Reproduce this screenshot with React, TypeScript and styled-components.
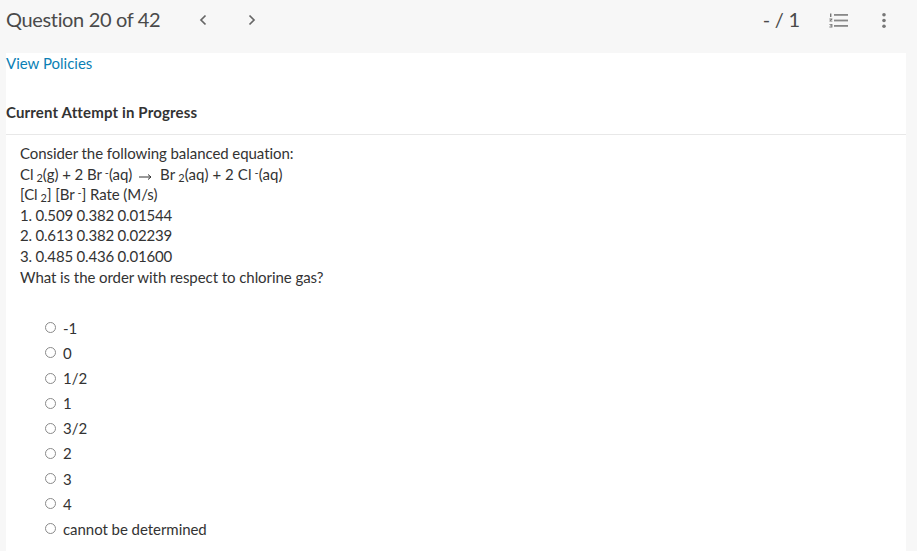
import { createGlobalStyle } from 'styled-components';
import styled from 'styled-components';

const options = ['-1', '0', '1/2', '1', '3/2', '2', '3', '4', 'cannot be determined'];

const rows = ['1. 0.509 0.382 0.01544', '2. 0.613 0.382 0.02239', '3. 0.485 0.436 0.01600'];

const GlobalStyle = createGlobalStyle`
  html, body {
    margin: 0;
    padding: 0;
    background: #f7f7f7;
  }
  body {
    font-family: Lato, "Liberation Sans", sans-serif;
    color: #333;
  }
`;

const Page = styled.div`
  width: 917px;
  height: 551px;
  overflow: hidden;
`;

const Header = styled.header`
  display: flex;
  align-items: center;
  height: 53px;
  padding: 0 31px 13px 6px;
  box-sizing: border-box;
`;

const Title = styled.h1`
  margin: 0 0 3px;
  font-size: 20px;
  font-weight: 400;
  letter-spacing: -0.35px;
  color: #4a4a4a;
  width: 193px;
`;

const NavButton = styled.button`
  display: flex;
  padding: 0;
  border: 0;
  background: none;
  width: 49px;
`;

const Score = styled.span`
  margin: 0 0 3px auto;
  font-size: 20px;
  letter-spacing: -0.2px;
  color: #4a4a4a;
`;

const ListButton = styled.button`
  display: flex;
  padding: 0;
  border: 0;
  background: none;
  margin-left: 29px;
`;

const MoreButton = styled.button`
  display: flex;
  padding: 0;
  border: 0;
  background: none;
  margin-left: 34px;
`;

const Content = styled.main`
  margin: 0 11px 0 6px;
  background: #fff;
  height: 498px;
`;

const PolicyLink = styled.a`
  display: block;
  font-size: 15px;
  line-height: 20px;
  color: #0b7fb5;
`;

const AttemptHeading = styled.h2`
  margin: 28px 0 0;
  padding-bottom: 11px;
  font-size: 15px;
  line-height: 22px;
  font-weight: 700;
  letter-spacing: 0.15px;
  color: #333;
  border-bottom: 1px solid #e8e8e8;
`;

const Question = styled.div`
  padding: 8px 14px 0;
  font-size: 15px;
  line-height: 20.6px;
  letter-spacing: -0.065px;
`;

const DataRow = styled.div`
  letter-spacing: -0.19px;
`;

const Products = styled.span`
  letter-spacing: 0.08px;
`;

const Sub = styled.span`
  font-size: 11px;
  vertical-align: -2px;
  line-height: 0;
  margin-left: 3px;
`;

const Sup = styled.span`
  font-size: 11px;
  vertical-align: 3px;
  line-height: 0;
  margin-left: 3px;
`;

const Arrow = styled.svg`
  margin: 0 8px 0 7px;
  vertical-align: -1px;
`;

const OptionList = styled.ul`
  list-style: none;
  margin: 28px 0 0;
  padding: 0 0 0 38.5px;
`;

const Option = styled.li`
  display: flex;
  align-items: center;
  gap: 7.5px;
  height: 25.15px;
  font-size: 15px;
  letter-spacing: -0.05px;
`;

const Radio = styled.span`
  box-sizing: border-box;
  width: 11px;
  height: 11px;
  border: 1px solid #8a8a8a;
  border-radius: 50%;
  flex: none;
`;

export default function App() {
  return (
    <Page>
      <GlobalStyle />
      <Header>
        <Title>Question 20 of 42</Title>
        <NavButton aria-label="Previous">
          <svg width="8" height="12" viewBox="0 0 8 12">
            <path d="M6.5 1.5 2 6l4.5 4.5" fill="none" stroke="#666" strokeWidth="1.7" />
          </svg>
        </NavButton>
        <NavButton aria-label="Next">
          <svg width="8" height="12" viewBox="0 0 8 12">
            <path d="M1.5 1.5 6 6l-4.5 4.5" fill="none" stroke="#666" strokeWidth="1.7" />
          </svg>
        </NavButton>
        <Score>- / 1</Score>
        <ListButton aria-label="Question list">
          <svg width="19" height="15" viewBox="0 0 19 15" fill="#888">
            <rect x="5" y="1" width="14" height="1.8" />
            <rect x="5" y="6.6" width="14" height="1.8" />
            <rect x="5" y="12" width="14" height="1.8" />
            <path d="M1 .5h1.4v3.4H1zM.4 5.6h3v.8l-1.6 1.4h1.6v.8h-3v-.8L2 6.4H.4zM.4 11h3v3.4h-3v-.8h2v-.6h-1.4v-.6h1.4v-.6h-2z" fill="#777" />
          </svg>
        </ListButton>
        <MoreButton aria-label="More">
          <svg width="4" height="15" viewBox="0 0 4 15" fill="#777">
            <circle cx="2" cy="1.8" r="1.8" />
            <circle cx="2" cy="7.5" r="1.8" />
            <circle cx="2" cy="13.2" r="1.8" />
          </svg>
        </MoreButton>
      </Header>
      <Content>
        <PolicyLink>View Policies</PolicyLink>
        <AttemptHeading>Current Attempt in Progress</AttemptHeading>
        <Question>
          <div>Consider the following balanced equation:</div>
          <div>
            Cl<Sub>2</Sub>(g) + 2 Br<Sup>-</Sup>(aq)
            <Arrow width="13" height="8" viewBox="0 0 13 8">
              <path d="M0 4h12M9 1.5 12 4 9 6.5" fill="none" stroke="#333" strokeWidth="1" />
            </Arrow>
            <Products>
              Br<Sub>2</Sub>(aq) + 2 Cl<Sup>-</Sup>(aq)
            </Products>
          </div>
          <div>
            [Cl<Sub>2</Sub>] [Br<Sup>-</Sup>] Rate (M/s)
          </div>
          {rows.map((row) => (
            <DataRow key={row}>{row}</DataRow>
          ))}
          <div>What is the order with respect to chlorine gas?</div>
        </Question>
        <OptionList>
          {options.map((option) => (
            <Option key={option}>
              <Radio />
              {option}
            </Option>
          ))}
        </OptionList>
      </Content>
    </Page>
  );
}
